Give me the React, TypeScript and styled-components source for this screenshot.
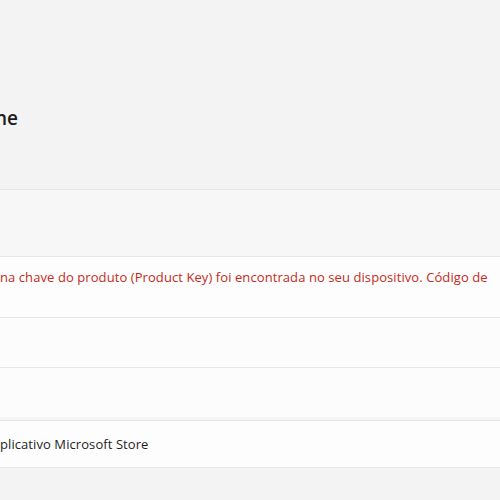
import React from "react";
import styled, { createGlobalStyle } from "styled-components";

const GlobalStyle = createGlobalStyle`
  html, body {
    margin: 0;
    padding: 0;
    background: #f3f3f3;
    font-family: "Open Sans", "Noto Sans", sans-serif;
  }
`;

const Page = styled.div`
  width: 500px;
  height: 500px;
  overflow: hidden;
  display: flex;
  flex-direction: column;
  background: #f3f3f3;
`;

const Header = styled.div`
  height: 189px;
  display: flex;
  align-items: flex-start;
`;

const Title = styled.h1`
  margin: 105px 0 0 -5px;
  font-size: 19px;
  font-weight: 600;
  color: #1b1b1b;
  white-space: nowrap;
`;

const Panel = styled.div<{ $bg: string; $height: number }>`
  height: ${(p) => p.$height}px;
  background: ${(p) => p.$bg};
  border-top: 1px solid #e6e6e6;
  display: flex;
  align-items: flex-start;
  box-sizing: border-box;
`;

const Stack = styled.div`
  display: flex;
  flex-direction: column;
  border-bottom: 1px solid #e8e8e8;
`;

const Gap = styled.div`
  height: 3px;
  background: #f6f6f6;
`;

const Message = styled.p<{ $color: string; $top: number }>`
  margin: ${(p) => p.$top}px 0 0 0;
  font-size: 13px;
  letter-spacing: 0.08px;
  line-height: 18px;
  color: ${(p) => p.$color};
  white-space: nowrap;
`;

export default function App() {
  return (
    <Page>
      <GlobalStyle />
      <Header>
        <Title>ne</Title>
      </Header>
      <Panel $bg="#f7f7f7" $height={67} />
      <Stack>
        <Panel $bg="#fdfdfd" $height={61}>
          <Message $color="#c42b1c" $top={11}>
            na chave do produto (Product Key) foi encontrada no seu dispositivo. Código de
          </Message>
        </Panel>
        <Panel $bg="#fcfcfc" $height={50} />
        <Panel $bg="#fcfcfc" $height={50} />
        <Gap />
        <Panel $bg="#fdfdfd" $height={47}>
          <Message $color="#1f1f1f" $top={14}>
            plicativo Microsoft Store
          </Message>
        </Panel>
      </Stack>
    </Page>
  );
}
